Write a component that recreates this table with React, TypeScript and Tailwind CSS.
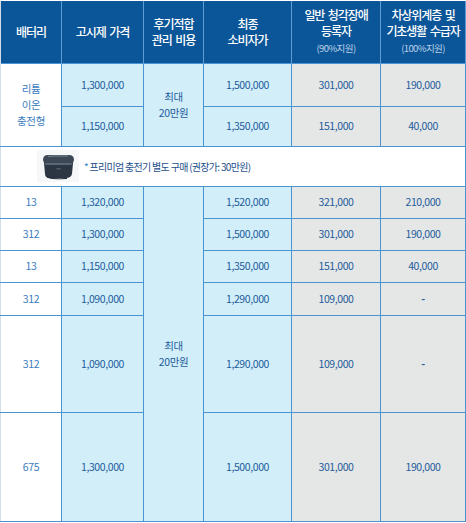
const font = { fontFamily: '"Noto Sans CJK KR", "Noto Sans", sans-serif' }

type Row = {
  battery: string
  price: string
  consumer: string
  general: string
  basic: string
  h: string
}

const lithium: Row[] = [
  { battery: '', price: '1,300,000', consumer: '1,500,000', general: '301,000', basic: '190,000', h: 'h-[43px]' },
  { battery: '', price: '1,150,000', consumer: '1,350,000', general: '151,000', basic: '40,000', h: 'h-[40px]' },
]

const regular: Row[] = [
  { battery: '13', price: '1,320,000', consumer: '1,520,000', general: '321,000', basic: '210,000', h: 'h-[32px]' },
  { battery: '312', price: '1,300,000', consumer: '1,500,000', general: '301,000', basic: '190,000', h: 'h-[32px]' },
  { battery: '13', price: '1,150,000', consumer: '1,350,000', general: '151,000', basic: '40,000', h: 'h-[32px]' },
  { battery: '312', price: '1,090,000', consumer: '1,290,000', general: '109,000', basic: '-', h: 'h-[33px]' },
  { battery: '312', price: '1,090,000', consumer: '1,290,000', general: '109,000', basic: '-', h: 'h-[97px]' },
  { battery: '675', price: '1,300,000', consumer: '1,500,000', general: '301,000', basic: '190,000', h: 'h-[109px]' },
]

const td = 'border border-[#4a95d1] text-center align-middle text-[10.5px] tracking-[-0.4px] text-[#1d5c9c] p-0 leading-[14px]'
const th = 'border-x border-[#5d9dd6] bg-[#0b5699] text-white text-[12px] tracking-[-1.1px] font-medium leading-[16px] text-center align-middle p-0 [word-spacing:2px]'

function ChargerCase() {
  return (
    <svg width="42" height="32" viewBox="0 0 42 32">
      <rect x="0" y="0" width="42" height="32" fill="#f6f7f8" />
      <path d="M6 10 Q6 5 11 5 L32 5 Q37 5 37 10 L36 13 L7 13 Z" fill="#3d4856" />
      <path d="M7 13 L36 13 L35 24 Q34 28 29 28 L13 28 Q8 28 8 24 Z" fill="#2c3643" />
      <path d="M8 13 L35 13 L34.6 15 L8.4 15 Z" fill="#5a6676" />
      <path d="M11 6.5 Q13 6 18 6 L31 6" stroke="#7d8897" strokeWidth="1" fill="none" />
      <rect x="19" y="18" width="5" height="1.5" rx="0.7" fill="#4c5767" />
      <path d="M10 27 Q14 29.5 30 28.5" stroke="#1b222b" strokeWidth="1" fill="none" />
    </svg>
  )
}

function Money({ label }: { label: string }) {
  return <span className={label === '-' ? 'font-bold' : ''}>{label}</span>
}

export default function App() {
  return (
    <div className="w-[466px] h-[523px] bg-white pt-px" style={font}>
      <table className="table-fixed border-collapse w-[465px]">
        <colgroup>
          <col className="w-[61px]" />
          <col className="w-[82px]" />
          <col className="w-[60px]" />
          <col className="w-[88px]" />
          <col className="w-[89px]" />
          <col className="w-[85px]" />
        </colgroup>
        <thead>
          <tr className="h-[62px]">
            <th className={th + ' border-l-[#d5dde5]'}>배터리</th>
            <th className={th}>고시제 가격</th>
            <th className={th}>
              후기적합
              <br />
              관리 비용
            </th>
            <th className={th}>
              최종
              <br />
              소비자가
            </th>
            <th className={th}>
              일반 청각장애
              <br />
              등록자
              <br />
              <span className="text-[9.5px] tracking-[-0.6px] font-normal text-[#bcd1e8]">(90%지원)</span>
            </th>
            <th className={th}>
              차상위계층 및
              <br />
              기초생활 수급자
              <br />
              <span className="text-[9.5px] tracking-[-0.6px] font-normal text-[#bcd1e8]">(100%지원)</span>
            </th>
          </tr>
        </thead>
        <tbody>
          {lithium.map((r, i) => (
            <tr key={'l' + i} className={r.h}>
              {i === 0 && (
                <td rowSpan={2} className={td + ' bg-white text-[#3b7cc0] leading-[16px] border-l-[#d5dde5]'}>
                  리튬
                  <br />
                  이온
                  <br />
                  충전형
                </td>
              )}
              <td className={td + ' bg-[#d2eef9]'}>{r.price}</td>
              {i === 0 && (
                <td rowSpan={2} className={td + ' bg-[#d2eef9] leading-[16px]'}>
                  최대
                  <br />
                  20만원
                </td>
              )}
              <td className={td + ' bg-[#d2eef9]'}>{r.consumer}</td>
              <td className={td + ' bg-[#e5e6e6]'}>{r.general}</td>
              <td className={td + ' bg-[#e5e6e6]'}>
                <Money label={r.basic} />
              </td>
            </tr>
          ))}
          <tr className="h-[40px]">
            <td colSpan={6} className="border border-[#4a95d1] border-l-[#d5dde5] bg-white p-0">
              <div className="flex items-center gap-[5px] pl-[36px]">
                <ChargerCase />
                <span className="text-[10px] tracking-[-0.7px] text-[#1d4f8a]">
                  <span className="text-[#2f7fd0]">*</span> 프리미엄 충전기 별도 구매 (권장가: 30만원)
                </span>
              </div>
            </td>
          </tr>
          {regular.map((r, i) => (
            <tr key={'r' + i} className={r.h}>
              <td className={td + ' bg-white text-[#3b7cc0] border-l-[#d5dde5]'}>{r.battery}</td>
              <td className={td + ' bg-[#d2eef9]'}>{r.price}</td>
              {i === 0 && (
                <td rowSpan={6} className={td + ' bg-[#d2eef9] leading-[16px]'}>
                  최대
                  <br />
                  20만원
                </td>
              )}
              <td className={td + ' bg-[#d2eef9]'}>{r.consumer}</td>
              <td className={td + ' bg-[#e5e6e6]'}>{r.general}</td>
              <td className={td + ' bg-[#e5e6e6]'}>
                <Money label={r.basic} />
              </td>
            </tr>
          ))}
        </tbody>
      </table>
    </div>
  )
}
